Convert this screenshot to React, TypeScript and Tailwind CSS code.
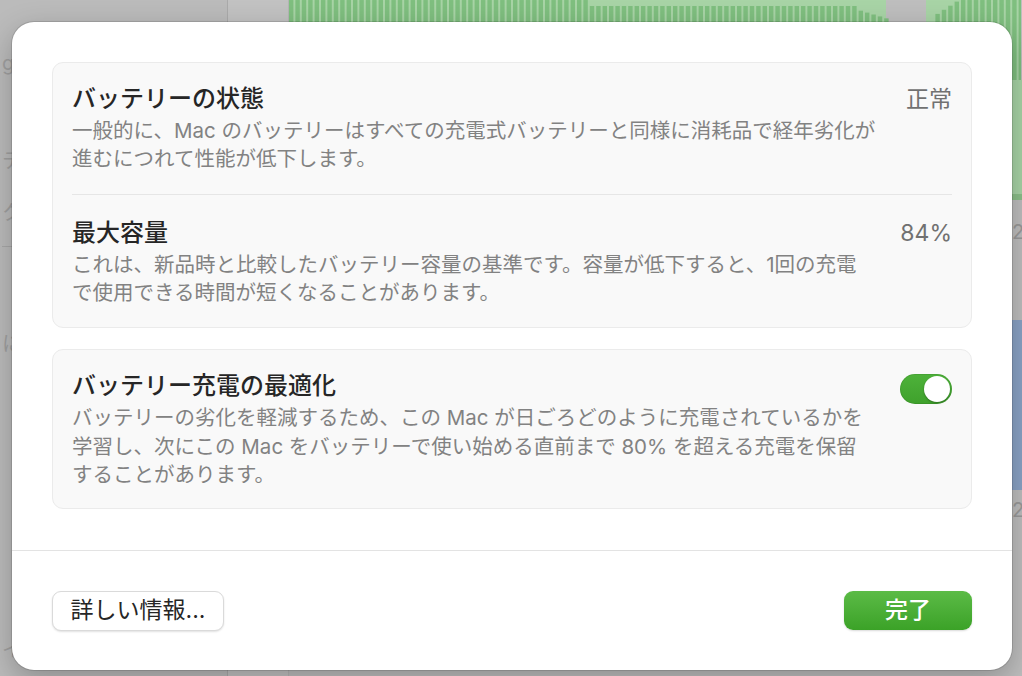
import React from "react";

function Chart() {
  const bars: React.ReactElement[] = [];
  let i = 0;
  for (let x = 290; x < 1022; x += 6.4) {
    let top = 0;
    if (x >= 590 && x < 854) top = 6;
    else if (x >= 854 && x < 887) top = 9 + (x - 854) * 0.3;
    else if (x >= 887 && x < 930) {
      i++;
      continue;
    } else if (x >= 930 && x < 958) top = 18 - (x - 930) * 0.64;
    bars.push(<rect key={i++} x={x} y={top} width={4.4} height={80 - top} fill="#7fbf7f" />);
  }
  return (
    <svg width="732" height="80" viewBox="290 0 732 80" className="block">
      <rect x="290" y="0" width="597" height="80" fill="#a8d4a6" />
      <rect x="927" y="0" width="95" height="80" fill="#a8d4a6" />
      {bars}
    </svg>
  );
}

function Toggle() {
  return (
    <div className="w-[52px] h-[30px] rounded-full bg-gradient-to-b from-[#4eb23a] to-[#3fa12c] p-[2px] flex justify-end shadow-[inset_0_0_0_1px_rgba(0,0,0,0.08)]">
      <div className="w-[26px] h-[26px] rounded-full bg-white shadow-[0_1px_2px_rgba(0,0,0,0.3)]" />
    </div>
  );
}

export default function App() {
  return (
    <div className="relative w-[1022px] h-[676px] overflow-hidden bg-[#bebebe] font-['Inter','Noto_Sans_CJK_JP',sans-serif]">
      {/* background window content */}
      <div className="flex h-full">
        <div className="w-[228px] h-full bg-[#bbbbbb] border-r border-[#aaaaaa] flex flex-col text-[#a0a0a0] text-[20px] pl-[2px]">
          <div className="mt-[48px]">ge</div>
          <div className="mt-[68px]">テ</div>
          <div className="mt-[22px]">ク</div>
          <div className="mt-[18px] w-[20px] border-t border-[#a8a8a8]" />
          <div className="mt-[82px]">に</div>
          <div className="mt-[276px]">イ</div>
        </div>
        <div className="w-[61px] h-full bg-[#c2c2c2] border-r border-[#b5b5b5]" />
        <div className="flex-1 h-full flex flex-col">
          <Chart />
          <div className="flex-1 flex justify-end">
            <div className="w-[10px] flex flex-col text-[#9a9a9a] text-[20px]">
              <div className="h-[114px] bg-[#a8d4a6]" />
              <div className="h-[6px] bg-[#8cc08a]" />
              <div className="mt-[18px] leading-[28px] w-[14px]">2</div>
              <div className="mt-[74px] h-[170px] bg-[#8aa3c6]" />
              <div className="mt-[6px] leading-[28px] w-[14px]">2</div>
            </div>
          </div>
        </div>
      </div>

      {/* dialog sheet */}
      <div className="absolute left-[12px] top-[22px] w-[1000px] h-[648px] rounded-[22px] bg-white shadow-[0_0_0_1px_rgba(0,0,0,0.12),0_10px_30px_rgba(0,0,0,0.25)] flex flex-col">
        <div className="px-[40px] pt-[40px] pb-[41px] flex flex-col gap-[21px] border-b border-[#e3e3e3]">
          {/* card 1 */}
          <div className="rounded-[11px] bg-[#f9f9f9] border border-[#ebebeb] px-[19px] pt-[20px] pb-[20px]">
            <div className="flex justify-between items-start">
              <div>
                <div className="text-[24px] leading-[32px] font-medium text-[#262626]">バッテリーの状態</div>
                <div className="mt-[2px] text-[20.5px] leading-[28px] text-[#828282] whitespace-nowrap">
                  一般的に、Mac のバッテリーはすべての充電式バッテリーと同様に消耗品で経年劣化が
                  <br />
                  進むにつれて性能が低下します。
                </div>
              </div>
              <div className="text-[23px] leading-[32px] text-[#717171]">正常</div>
            </div>
            <div className="mt-[21px] mb-[22px] border-t border-[#e6e6e6]" />
            <div className="flex justify-between items-start">
              <div>
                <div className="text-[24px] leading-[32px] font-medium text-[#262626]">最大容量</div>
                <div className="mt-[2px] text-[20.5px] leading-[28px] text-[#828282] whitespace-nowrap">
                  これは、新品時と比較したバッテリー容量の基準です。容量が低下すると、1回の充電
                  <br />
                  で使用できる時間が短くなることがあります。
                </div>
              </div>
              <div className="text-[23px] leading-[32px] text-[#717171]">84%</div>
            </div>
          </div>

          {/* card 2 */}
          <div className="rounded-[11px] bg-[#f9f9f9] border border-[#ebebeb] px-[19px] pt-[20px] pb-[18px]">
            <div className="flex justify-between items-start">
              <div>
                <div className="text-[24px] leading-[32px] font-medium text-[#262626]">バッテリー充電の最適化</div>
                <div className="mt-[2px] text-[20.5px] leading-[28.5px] text-[#828282] whitespace-nowrap">
                  バッテリーの劣化を軽減するため、この Mac が日ごろどのように充電されているかを
                  <br />
                  学習し、次にこの Mac をバッテリーで使い始める直前まで 80% を超える充電を保留
                  <br />
                  することがあります。
                </div>
              </div>
              <div className="mt-[4px]">
                <Toggle />
              </div>
            </div>
          </div>
        </div>

        {/* footer */}
        <div className="px-[40px] pt-[40px] flex justify-between items-start">
          <button className="w-[172px] h-[40px] rounded-[9px] bg-white border border-[#dadada] shadow-[0_1px_2px_rgba(0,0,0,0.12)] text-[23px] text-[#262626] flex items-center justify-center">
            詳しい情報...
          </button>
          <button className="w-[128px] h-[39px] rounded-[9px] bg-gradient-to-b from-[#5bbb46] to-[#3ba227] shadow-[0_1px_2px_rgba(0,0,0,0.15)] text-[23px] font-medium text-white flex items-center justify-center">
            完了
          </button>
        </div>
      </div>
    </div>
  );
}
